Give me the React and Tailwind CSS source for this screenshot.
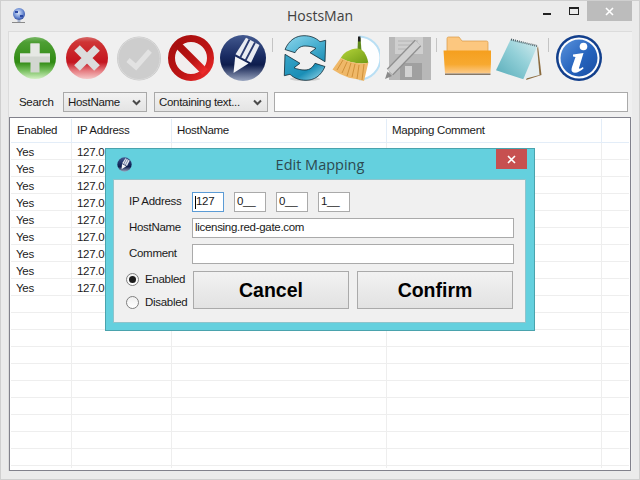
import React from 'react'

// Only the first row's hostname pokes out above the dialog
const rows = Array.from({ length: 20 }, (_, i) => (i < 9 ? ['Yes', '127.0.0.1', i === 0 ? 'www.red-gate.com' : ''] : ['', '', '']))

// Toolbar icons, all on a 48x48 box
function PlusIcon() {
  return (
    <svg width="48" height="48" viewBox="0 0 48 48">
      <defs>
        <linearGradient id="plusBg" x1="0" y1="0" x2="0" y2="1">
          <stop offset="0" stopColor="#7ab868" />
          <stop offset="0.12" stopColor="#4e9f34" />
          <stop offset="0.6" stopColor="#2f8a12" />
          <stop offset="0.8" stopColor="#79c060" />
          <stop offset="1" stopColor="#d3f0c4" />
        </linearGradient>
      </defs>
      <circle cx="24" cy="24" r="21" fill="url(#plusBg)" />
      <path d="M19.5 9.5h9v10h10.500v9h-10.500v10h-9v-10h-10.500v-9h10.500z" fill="#d2d6d0" />
      <path d="M19.500 9.500h9v10h10.500v3h-30v-3h10.500z" fill="#e6e8e4" />
    </svg>
  )
}

function CrossIcon() {
  return (
    <svg width="48" height="48" viewBox="0 0 48 48">
      <defs>
        <linearGradient id="crossBg" x1="0" y1="0" x2="0" y2="1">
          <stop offset="0" stopColor="#d66a6a" />
          <stop offset="0.12" stopColor="#cf3535" />
          <stop offset="0.6" stopColor="#c4151f" />
          <stop offset="0.8" stopColor="#e57a7f" />
          <stop offset="1" stopColor="#f6c9c9" />
        </linearGradient>
      </defs>
      <circle cx="24" cy="24" r="21" fill="url(#crossBg)" />
      <path d="M14 14L34 34M34 14L14 34" stroke="#dcdcdc" strokeWidth="8" fill="none" />
    </svg>
  )
}

function CheckIcon() {
  return (
    <svg width="48" height="48" viewBox="0 0 48 48">
      <circle cx="24" cy="24.500" r="22" fill="#c9c9c9" />
      <circle cx="24" cy="24.500" r="21" fill="#cdcdcd" stroke="#dadada" />
      <path d="M13 26L21 33L35 17" stroke="#e2e2e2" strokeWidth="5" fill="none" />
    </svg>
  )
}

function BanIcon() {
  return (
    <svg width="48" height="48" viewBox="0 0 48 48">
      <defs>
        <linearGradient id="banBg" x1="0" y1="0" x2="1" y2="1">
          <stop offset="0" stopColor="#a50d0d" />
          <stop offset="0.6" stopColor="#bd1414" />
          <stop offset="1" stopColor="#ee2b2b" />
        </linearGradient>
      </defs>
      <circle cx="24" cy="24" r="19.500" fill="#f2eeee" stroke="url(#banBg)" strokeWidth="7" />
      <path d="M10 10L38 38" stroke="url(#banBg)" strokeWidth="7.500" />
    </svg>
  )
}

function PencilIcon({ size = 48 }) {
  return (
    <svg width={size} height={size} viewBox="0 0 48 48">
      <defs>
        <linearGradient id="penBg" x1="0" y1="0" x2="0" y2="1">
          <stop offset="0" stopColor="#43598f" />
          <stop offset="0.45" stopColor="#1a2c63" />
          <stop offset="0.65" stopColor="#0e1d4d" />
          <stop offset="1" stopColor="#9aa6c0" />
        </linearGradient>
      </defs>
      <circle cx="24" cy="24" r="23" fill="url(#penBg)" />
      <path d="M27 3.700L40.500 11L32 28.700L16.500 20.300z" fill="#e8ebf2" />
      <path d="M30.500 5.500L21 24M36 8.500L26.500 26.500" stroke="#2a3b70" strokeWidth="1.800" />
      <path d="M16.200 22.500L29.500 29.500L14.500 39z" fill="#f4f5f8" />
    </svg>
  )
}

function RefreshIcon() {
  return (
    <svg width="48" height="48" viewBox="0 0 48 48">
      <defs>
        <linearGradient id="refTop" x1="0" y1="0" x2="1" y2="1">
          <stop offset="0" stopColor="#8fd6ec" />
          <stop offset="0.5" stopColor="#4fb4d4" />
          <stop offset="1" stopColor="#1d8fb6" />
        </linearGradient>
        <linearGradient id="refBot" x1="0" y1="0" x2="1" y2="1">
          <stop offset="0" stopColor="#3aa6c9" />
          <stop offset="0.6" stopColor="#1a8eb6" />
          <stop offset="1" stopColor="#a5e0f0" />
        </linearGradient>
      </defs>
      <ellipse cx="24" cy="45" rx="15" ry="2" fill="#d0d0d0" />
      <path d="M4 15.500C8 6 15 1.700 23 1.700C30 1.700 35 4 39 7.700L44.700 6.300L44 27.700L29 18.700L35 14.300C32 12.800 28 12 24 12C19 12 16 15 14 18.700z" fill="url(#refTop)" stroke="#102a35" strokeWidth="0.800" />
      <path d="M44 32.500C40 42 33 46.300 25 46.300C18 46.300 13 44 9 40.300L3.300 41.700L4 20.300L19 29.300L13 33.700C16 35.200 20 36 24 36C29 36 32 33 34 29.300z" fill="url(#refBot)" stroke="#102a35" strokeWidth="0.800" />
    </svg>
  )
}

function BroomIcon() {
  return (
    <svg width="48" height="48" viewBox="0 0 48 48">
      <defs>
        <linearGradient id="broomHead" x1="0" y1="0" x2="1" y2="1">
          <stop offset="0" stopColor="#b5d43a" />
          <stop offset="1" stopColor="#6f9a14" />
        </linearGradient>
      </defs>
      <path d="M27 2.500A21.500 21.500 0 0 1 27 45.500z" fill="#fdfeff" stroke="none" />
      <path d="M27 2.500A21.500 21.500 0 0 1 27 45.500" fill="none" stroke="#b9dff4" strokeWidth="2" />
      <path d="M26 4h2.500l1 13h-4z" fill="#5f8a1c" />
      <path d="M26 2.500h2.500v5h-2.500z" fill="#222" />
      <path d="M8.700 24C12 18 18 15 25 14.500C31 14.500 34.500 20 36.300 28.700C27 31 17 28 8.700 24z" fill="url(#broomHead)" />
      <path d="M0.500 35.500L8.700 24C17 28 27 31 36.300 28.700L32 47L24 45L17 43.700L8 40z" fill="#efb868" />
      <path d="M5 36L11 26M10 39L15 28M15 42L19 29M20 43L23 30M25 45L27 31M30 46L32 30" stroke="#d0913a" strokeWidth="1" />
    </svg>
  )
}

function DiskIcon() {
  return (
    <svg width="48" height="48" viewBox="0 0 48 48">
      <path d="M6 3h42v43h-42z" fill="#b8b8b8" />
      <path d="M12 3h28v17h-28z" fill="#cfcfcf" />
      <path d="M15 7h20M15 11h20M15 15h14" stroke="#b4b4b4" strokeWidth="1" />
      <path d="M17 29h22v17h-22z" fill="#a0a0a0" />
      <path d="M22 32h7v11h-7z" fill="#d2d2d2" />
      <path d="M7 38L35 9" stroke="#8f8f8f" strokeWidth="9" />
      <path d="M7 38L35 9" stroke="#d0d0d0" strokeWidth="6.500" />
      <path d="M4.500 37.500L9 42L2 45z" fill="#8a8a8a" />
    </svg>
  )
}

function FolderIcon() {
  return (
    <svg width="48" height="48" viewBox="0 0 48 48">
      <defs>
        <linearGradient id="folderFront" x1="0" y1="0" x2="0" y2="1">
          <stop offset="0" stopColor="#f59f1e" />
          <stop offset="0.6" stopColor="#f7a930" />
          <stop offset="1" stopColor="#fccb8c" />
        </linearGradient>
      </defs>
      <path d="M4 4.500Q4 3 5.500 3H16L19 7H43.500Q45 7 45 8.500V20H4z" fill="#fcc77f" stroke="#d99a45" strokeWidth="0.700" />
      <path d="M0.500 16.500H48.500L47.500 39.500H2z" fill="url(#folderFront)" />
      <path d="M2 39.500H47.500V41H2z" fill="#857868" />
    </svg>
  )
}

function NotepadIcon() {
  return (
    <svg width="48" height="48" viewBox="0 0 48 48">
      <defs>
        <linearGradient id="noteFace" x1="0" y1="1" x2="1" y2="0">
          <stop offset="0" stopColor="#56abb8" />
          <stop offset="0.55" stopColor="#93d0d8" />
          <stop offset="1" stopColor="#d6edf0" />
        </linearGradient>
      </defs>
      <path d="M43 12L46.500 41L31 46z" fill="#8b6b3e" />
      <path d="M42 12L44.500 41L28.300 45.300z" fill="#e6eef0" />
      <path d="M15.700 5.300L42.300 12L28.300 45.300L1 36.300z" fill="url(#noteFace)" />
      <path d="M16 5.500L42 12" stroke="#4a5a60" strokeWidth="2" strokeDasharray="1 1" />
    </svg>
  )
}

function InfoIcon() {
  return (
    <svg width="48" height="48" viewBox="0 0 48 48">
      <defs>
        <linearGradient id="infoBg" x1="0" y1="0" x2="1" y2="1">
          <stop offset="0" stopColor="#5b93dc" />
          <stop offset="0.55" stopColor="#2563bd" />
          <stop offset="1" stopColor="#1a4ea3" />
        </linearGradient>
      </defs>
      <circle cx="24" cy="24" r="23" fill="#123f8c" />
      <circle cx="24" cy="24" r="20.500" fill="#fdfdfd" />
      <circle cx="24" cy="24" r="18.500" fill="url(#infoBg)" />
      <circle cx="28.500" cy="12.500" r="3.800" fill="#fff" />
      <path d="M18 20.500L28.500 19L24 34Q24 36 28 33L28.500 34.500Q23 39.500 18.500 38.500Q15.500 37.500 17 33L20.500 23L18 22.500z" fill="#fff" />
    </svg>
  )
}

function GlobeIcon() {
  return (
    <svg width="14" height="17" viewBox="0 0 14 17">
      <defs>
        <radialGradient id="globeBg" cx="0.45" cy="0.4" r="0.7">
          <stop offset="0" stopColor="#dfe8f8" />
          <stop offset="0.55" stopColor="#6f8fd4" />
          <stop offset="1" stopColor="#16308c" />
        </radialGradient>
      </defs>
      <circle cx="7" cy="7" r="6" fill="url(#globeBg)" />
      <path d="M3 4h3v2h-3zM8 8h3v2h-3z" fill="#2c4aa4" />
      <path d="M5.500 13h3v2h-3z" fill="#a8b4cc" />
      <path d="M0 15h13v1h-13z" fill="#8a8a8a" />
    </svg>
  )
}

function Chevron() {
  return (
    <svg width="9" height="7" viewBox="0 0 9 7">
      <path d="M1 1.500L4.500 5L8 1.500" stroke="#4a4a4a" strokeWidth="2" fill="none" />
    </svg>
  )
}

function Slot({ className, children }) {
  return <div className={`flex justify-center shrink-0 ${className}`}>{children}</div>
}

function Sep({ className }) {
  return (
    <div className={`shrink-0 flex self-start pt-[6px] ${className}`}>
      <div className="w-[1px] h-[14px] bg-[#c4c4c4]" />
    </div>
  )
}

function Select({ label, className }) {
  return (
    <div className={`h-[20px] border border-[#a9a9a9] bg-gradient-to-b from-[#f2f2f2] to-[#e4e4e4] flex items-center justify-between pl-[4px] pr-[5px] ${className}`}>
      <span className="pt-[1px]">{label}</span>
      <Chevron />
    </div>
  )
}

function Field({ className, children }) {
  return (
    <div className={`h-[20px] bg-white border border-[#aaaaaa] flex items-center pl-[2px] leading-none ${className}`}>
      {children}
    </div>
  )
}

function Radio({ checked, label }) {
  return (
    <div className="flex items-center h-[13px]">
      <div className="w-[13px] h-[13px] rounded-full border border-[#7f7f7f] bg-gradient-to-b from-[#f0f0f0] to-[#ffffff] flex items-center justify-center">
        {checked && <div className="w-[7px] h-[7px] rounded-full bg-[#1c1c1c]" />}
      </div>
      <span className="ml-[6px] pt-[1px]">{label}</span>
    </div>
  )
}

function EditDialog() {
  return (
    <div className="absolute left-[104px] top-[147px] w-[430px] h-[183px] bg-[#64d0de] border border-[#4aa3ad] flex flex-col">
      <div className="h-[30px] shrink-0 relative flex items-center justify-center">
        <div className="absolute left-[11px] top-[8px] flex">
          <PencilIcon size={15} />
        </div>
        <span className="text-[14.500px] tracking-normal text-[#2d4a50] font-['Open_Sans',sans-serif] mt-[1px]">Edit Mapping</span>
        <div className="absolute right-[7px] top-0 w-[31px] h-[20px] bg-[#c75050] flex items-center justify-center">
          <svg width="9" height="9" viewBox="0 0 9 9">
            <path d="M1 1L8 8M8 1L1 8" stroke="#fff" strokeWidth="1.600" />
          </svg>
        </div>
      </div>
      <div className="ml-[7px] mr-[8px] h-[144px] bg-[#f0f0f0] border border-[#8fc4cc] pt-[12px] flex flex-col gap-[6px]">
        <div className="flex items-center">
          <div className="w-[78px] pl-[15px] shrink-0">IP Address</div>
          <Field className="w-[32px] !border-[#5b9bd5] mr-[10px]">
            <span className="w-[1px] h-[13px] bg-black" />
            <span>127</span>
          </Field>
          <Field className="w-[32px] mr-[10px]">0__</Field>
          <Field className="w-[32px] mr-[10px]">0__</Field>
          <Field className="w-[32px]">1__</Field>
        </div>
        <div className="flex items-center">
          <div className="w-[78px] pl-[15px] shrink-0">HostName</div>
          <Field className="w-[322px]">licensing.red-gate.com</Field>
        </div>
        <div className="flex items-center">
          <div className="w-[78px] pl-[15px] shrink-0">Comment</div>
          <Field className="w-[322px]" />
        </div>
        <div className="flex mt-[1px]">
          <div className="w-[79px] pl-[12px] pt-[1px] shrink-0 flex flex-col gap-[10px] justify-center">
            <Radio checked label="Enabled" />
            <Radio label="Disabled" />
          </div>
          <button className="w-[156px] h-[38px] pt-[2px] border border-[#aaaaaa] bg-gradient-to-b from-[#f2f2f2] to-[#e2e2e2] font-bold text-[19.500px] tracking-normal text-black">
            Cancel
          </button>
          <button className="w-[156px] h-[38px] pt-[2px] ml-[8px] border border-[#aaaaaa] bg-gradient-to-b from-[#f2f2f2] to-[#e2e2e2] font-bold text-[19.500px] tracking-normal text-black">
            Confirm
          </button>
        </div>
      </div>
    </div>
  )
}

export default function App() {
  return (
    <div className="relative w-[640px] h-[480px] overflow-hidden bg-[#ebebeb] border border-[#cfcfcf] flex flex-col text-[11.500px] tracking-[-0.3px] text-[#1a1a1a] font-['Liberation_Sans',sans-serif]">
      {/* Title bar */}
      <div className="h-[30px] shrink-0 grid grid-cols-[1fr_auto_1fr]">
        <div className="pl-[11px] pt-[6px]">
          <GlobeIcon />
        </div>
        <div className="text-[14px] tracking-normal text-[#404040] pt-[4px] font-['Open_Sans',sans-serif]">HostsMan</div>
        <div className="flex justify-end items-start pr-[7px]">
          <div className="w-[8px] h-[2px] bg-[#222] mt-[12px] mr-[18px]" />
          <div className="w-[10px] h-[8px] border border-[#222] border-t-2 mt-[6px] mr-[8px]" />
          <div className="w-[45px] h-[20px] bg-[#bcbcbc] flex items-center justify-center">
            <svg width="9" height="9" viewBox="0 0 9 9">
              <path d="M1 1L8 8M8 1L1 8" stroke="#fff" strokeWidth="1.600" />
            </svg>
          </div>
        </div>
      </div>

      {/* Client area */}
      <div className="flex-1 ml-[7px] mr-[7px] mb-[8px] bg-[#f0f0f0] border-t border-l border-[#dcdcdc] flex flex-col min-h-0">
        {/* Toolbar */}
        <div className="h-[60px] pb-[8px] shrink-0 flex items-center">
          <Slot className="w-[52px]"><PlusIcon /></Slot>
          <Slot className="w-[52px]"><CrossIcon /></Slot>
          <Slot className="w-[52px]"><CheckIcon /></Slot>
          <Slot className="w-[51px]"><BanIcon /></Slot>
          <Slot className="w-[53px]"><PencilIcon /></Slot>
          <Sep className="w-[10px] pl-[3px]" />
          <Slot className="w-[52px]"><RefreshIcon /></Slot>
          <Slot className="w-[50px]"><BroomIcon /></Slot>
          <Slot className="w-[52px]"><DiskIcon /></Slot>
          <Sep className="w-[8px] pl-[3px]" />
          <Slot className="w-[52px]"><FolderIcon /></Slot>
          <Slot className="w-[51px]"><NotepadIcon /></Slot>
          <Sep className="w-[9px] pl-[4px]" />
          <Slot className="w-[52px]"><InfoIcon /></Slot>
        </div>

        {/* Search row */}
        <div className="h-[20px] shrink-0 flex items-center">
          <span className="ml-[10px] w-[44px] pt-[1px]">Search</span>
          <Select label="HostName" className="w-[84px]" />
          <Select label="Containing text..." className="w-[114px] ml-[7px]" />
          <div className="h-[20px] w-[354px] ml-[6px] bg-white border border-[#aaaaaa]" />
        </div>

        {/* Mapping table */}
        <div className="mt-[5px] mr-[1px] flex-1 min-h-0 bg-white border border-[#82828c] overflow-hidden px-[1px] pb-[2px]">
          <div className="h-full overflow-hidden">
            <div className="h-[25px] pt-[1px] grid grid-cols-[61px_100px_215px_215px_1fr] border-b border-[#e3edf8]">
              <div className="border-r border-[#e3edf8] pl-[6px] flex items-center">Enabled</div>
              <div className="border-r border-[#e3edf8] pl-[5px] flex items-center">IP Address</div>
              <div className="border-r border-[#e3edf8] pl-[5px] flex items-center">HostName</div>
              <div className="border-r border-[#e3edf8] pl-[5px] flex items-center">Mapping Comment</div>
              <div />
            </div>
            {rows.map((row, i) => (
              <div key={i} className="h-[17px] grid grid-cols-[61px_100px_215px_215px_1fr] border-b border-[#eeeeee]">
                <div className="border-r border-[#eeeeee] pl-[5px] pt-[1px] flex items-center">{row[0]}</div>
                <div className="border-r border-[#eeeeee] pl-[5px] pt-[1px] flex items-center">{row[1]}</div>
                <div className="border-r border-[#eeeeee] pl-[5px] pt-[1px] flex items-center">{row[2]}</div>
                <div className="border-r border-[#eeeeee]" />
                <div />
              </div>
            ))}
          </div>
        </div>
      </div>

      <EditDialog />
    </div>
  )
}
